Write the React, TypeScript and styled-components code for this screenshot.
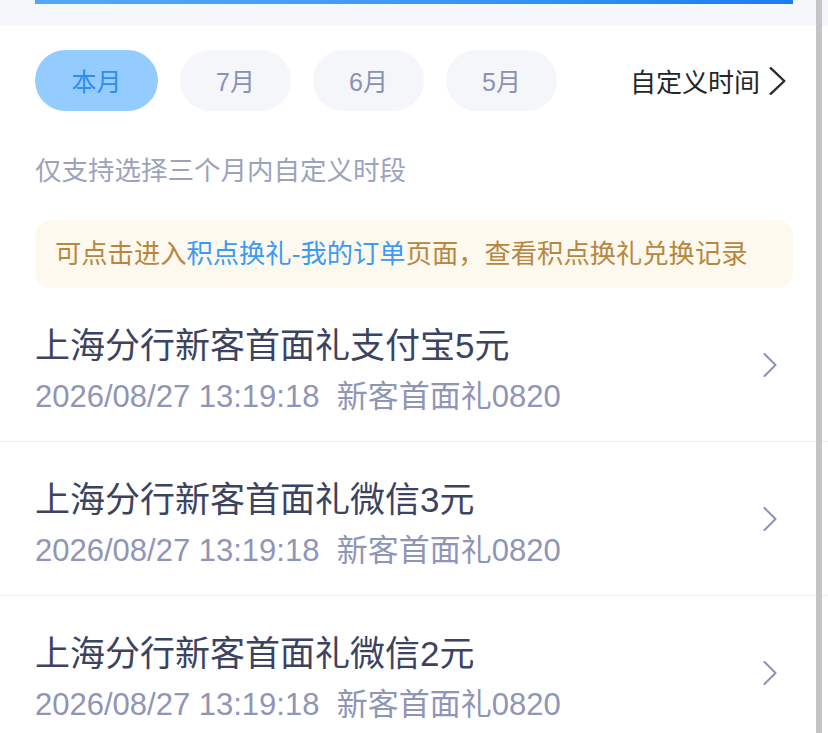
import React from 'react';
import styled, { createGlobalStyle } from 'styled-components';

const GlobalStyle = createGlobalStyle`
  html, body {
    margin: 0;
    padding: 0;
    background: #fff;
  }
  body {
    font-family: "Liberation Sans", "Noto Sans CJK SC", sans-serif;
    -webkit-font-smoothing: antialiased;
  }
`;

const Page = styled.div`
  position: relative;
  width: 828px;
  height: 733px;
  overflow: hidden;
  background: #fff;
`;

const TopBand = styled.div`
  height: 26px;
  padding: 0 35px;
  background: #f5f7fa;
`;

const BannerEdge = styled.div`
  height: 4px;
  background: linear-gradient(90deg, #55a8f8 0%, #3f98f5 50%, #1a7ef0 100%);
`;

const FilterRow = styled.div`
  display: flex;
  align-items: center;
  gap: 22px;
  margin-top: 24px;
  padding: 0 42px 0 35px;
`;

const Pill = styled.button<{ $active?: boolean; $wide?: boolean }>`
  height: 61px;
  width: ${(p) => (p.$wide ? '123px' : '111px')};
  border: none;
  border-radius: 31px;
  padding: 0 0 2px;
  font-family: "Liberation Sans", "Noto Sans CJK SC", sans-serif;
  font-size: 25px;
  background: ${(p) => (p.$active ? '#95ccff' : '#f5f6f9')};
  color: ${(p) => (p.$active ? '#2d8df0' : '#8b91b3')};
`;

const Custom = styled.div`
  margin-left: auto;
  display: flex;
  align-items: center;
  gap: 9px;
  font-size: 26px;
  color: #262626;
`;

const Hint = styled.div`
  margin-top: 41px;
  padding: 0 35px;
  line-height: 38px;
  font-size: 26.5px;
  color: #9da2bd;
`;

const Notice = styled.div`
  margin: 30px 35px 0;
  height: 68px;
  line-height: 68px;
  padding: 0 20px;
  border-radius: 16px;
  background: #fdf9ee;
  font-size: 26.3px;
  color: #b8873f;
`;

const Link = styled.span`
  color: #3b9af2;
`;

const List = styled.div`
  display: flex;
  flex-direction: column;
`;

const Item = styled.div`
  display: flex;
  align-items: center;
  height: 154px;
  padding: 0 51px 0 35px;
  box-sizing: border-box;
  border-bottom: 1px solid #eeeff2;
`;

const ItemBody = styled.div`
  flex: 1;
  display: flex;
  flex-direction: column;
  padding-top: 12px;
`;

const Title = styled.div`
  font-size: 35px;
  line-height: 42px;
  color: #3c4361;
`;

const Sub = styled.div`
  margin-top: 10px;
  font-size: 31px;
  line-height: 40px;
  color: #8f95b6;
  white-space: pre;
`;

const ScrollThumb = styled.div`
  position: absolute;
  top: 0;
  right: 6px;
  width: 6px;
  height: 100%;
  background: #c4c4c4;
`;

const Chevron = ({ w, h, color, stroke }: { w: number; h: number; color: string; stroke: number }) => (
  <svg width={w} height={h} viewBox={`0 0 ${w} ${h}`} fill="none">
    <path
      d={`M${stroke / 2 + 0.5} ${stroke / 2} L${w - stroke / 2 - 0.5} ${h / 2} L${stroke / 2 + 0.5} ${h - stroke / 2}`}
      stroke={color}
      strokeWidth={stroke}
      strokeLinecap="round"
      strokeLinejoin="round"
    />
  </svg>
);

const records = [
  { title: '上海分行新客首面礼支付宝5元', time: '2026/08/27 13:19:18', name: '新客首面礼0820' },
  { title: '上海分行新客首面礼微信3元', time: '2026/08/27 13:19:18', name: '新客首面礼0820' },
  { title: '上海分行新客首面礼微信2元', time: '2026/08/27 13:19:18', name: '新客首面礼0820' },
];

const months = ['本月', '7月', '6月', '5月'];

export default function App() {
  return (
    <Page>
      <GlobalStyle />
      <TopBand>
        <BannerEdge />
      </TopBand>
      <FilterRow>
        {months.map((m, i) => (
          <Pill key={m} $active={i === 0} $wide={i === 0}>
            {m}
          </Pill>
        ))}
        <Custom>
          自定义时间
          <Chevron w={17} h={28} color="#2b2b2b" stroke={2.4} />
        </Custom>
      </FilterRow>
      <Hint>仅支持选择三个月内自定义时段</Hint>
      <Notice>
        可点击进入<Link>积点换礼-我的订单</Link>页面，查看积点换礼兑换记录
      </Notice>
      <List>
        {records.map((r, i) => (
          <Item key={i}>
            <ItemBody>
              <Title>{r.title}</Title>
              <Sub>{`${r.time}  ${r.name}`}</Sub>
            </ItemBody>
            <Chevron w={14} h={24} color="#8a90b8" stroke={2} />
          </Item>
        ))}
      </List>
      <ScrollThumb />
    </Page>
  );
}
